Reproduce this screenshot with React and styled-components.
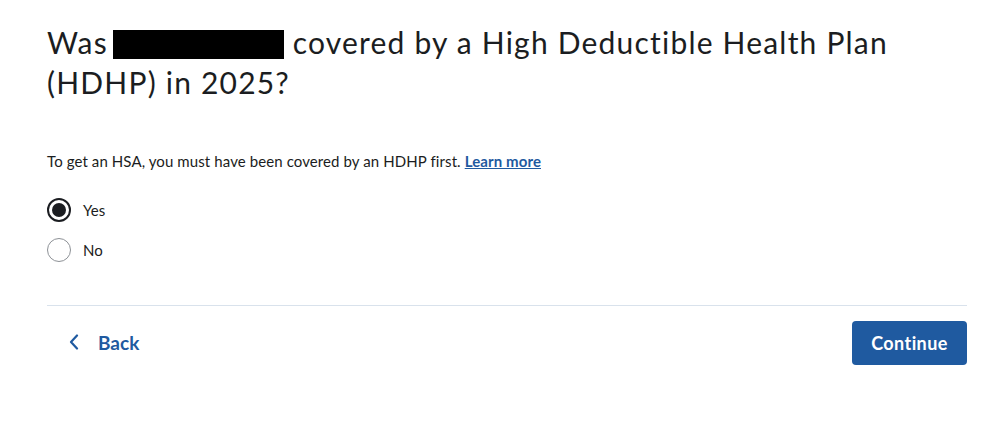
import React, { useState } from 'react'
import styled, { createGlobalStyle } from 'styled-components'

const GlobalStyle = createGlobalStyle`
  body {
    margin: 0;
    background: #ffffff;
    font-family: 'Lato', 'Open Sans', sans-serif;
    color: #1b1d21;
  }
`

const Page = styled.main`
  width: 920px;
  padding: 22px 0 0 47px;
`

const Heading = styled.h1`
  margin: 0;
  font-size: 30px;
  line-height: 40px;
  font-weight: 400;
  letter-spacing: 1.2px;
  color: #1b1d21;
  width: 900px;
`

const Redacted = styled.span`
  display: inline-block;
  width: 171px;
  height: 29px;
  margin-left: -4px;
  background: #000;
  vertical-align: -5px;
`

const Intro = styled.p`
  margin: 48px 0 0;
  font-size: 15px;
  line-height: 22px;
  letter-spacing: 0.1px;
`

const Link = styled.a`
  color: #1f5aa0;
  font-weight: 700;
  text-decoration: underline;
  cursor: pointer;
`

const Options = styled.div`
  margin-top: 26px;
  display: flex;
  flex-direction: column;
  gap: 16px;
`

const Option = styled.label`
  display: flex;
  align-items: center;
  gap: 12px;
  font-size: 15px;
  cursor: pointer;
`

const Circle = styled.span`
  box-sizing: border-box;
  width: 24px;
  height: 24px;
  border-radius: 50%;
  border: ${p => (p.$checked ? '2px solid #1b1d21' : '1px solid #8d9196')};
  display: flex;
  align-items: center;
  justify-content: center;

  &::after {
    content: '';
    width: 14px;
    height: 14px;
    border-radius: 50%;
    background: ${p => (p.$checked ? '#1b1d21' : 'transparent')};
  }
`

const Divider = styled.hr`
  margin: 43px 0 0;
  border: none;
  border-top: 1px solid #d9e2ec;
`

const Actions = styled.div`
  display: flex;
  justify-content: space-between;
  align-items: center;
  margin-top: 15px;
`

const BackButton = styled.button`
  display: flex;
  align-items: center;
  gap: 19px;
  background: none;
  border: none;
  padding: 0 0 2px 22px;
  font-family: inherit;
  font-size: 19px;
  font-weight: 700;
  color: #1f5aa0;
  cursor: pointer;
`

const ContinueButton = styled.button`
  width: 115px;
  height: 44px;
  border: none;
  border-radius: 4px;
  background: #1f5aa0;
  color: #ffffff;
  font-family: inherit;
  font-size: 18px;
  font-weight: 700;
  letter-spacing: 0.4px;
  cursor: pointer;
`

const Chevron = () => (
  <svg width="10" height="16" viewBox="0 0 10 16" fill="none">
    <path d="M8 1.5 L2 8 L8 14.5" stroke="#1f5aa0" strokeWidth="2.2" strokeLinecap="round" strokeLinejoin="round" />
  </svg>
)

const App = () => {
  const [answer, setAnswer] = useState('yes')
  const options = [
    { id: 'yes', label: 'Yes' },
    { id: 'no', label: 'No' },
  ]

  return (
    <>
      <GlobalStyle />
      <Page>
        <Heading>
          Was <Redacted /> covered by a High Deductible Health Plan (HDHP) in 2025?
        </Heading>
        <Intro>
          To get an HSA, you must have been covered by an HDHP first. <Link>Learn more</Link>
        </Intro>
        <Options>
          {options.map(item => (
            <Option key={item.id} onClick={() => setAnswer(item.id)}>
              <Circle $checked={answer === item.id} />
              {item.label}
            </Option>
          ))}
        </Options>
        <Divider />
        <Actions>
          <BackButton>
            <Chevron />
            Back
          </BackButton>
          <ContinueButton>Continue</ContinueButton>
        </Actions>
      </Page>
    </>
  )
}

export default App
